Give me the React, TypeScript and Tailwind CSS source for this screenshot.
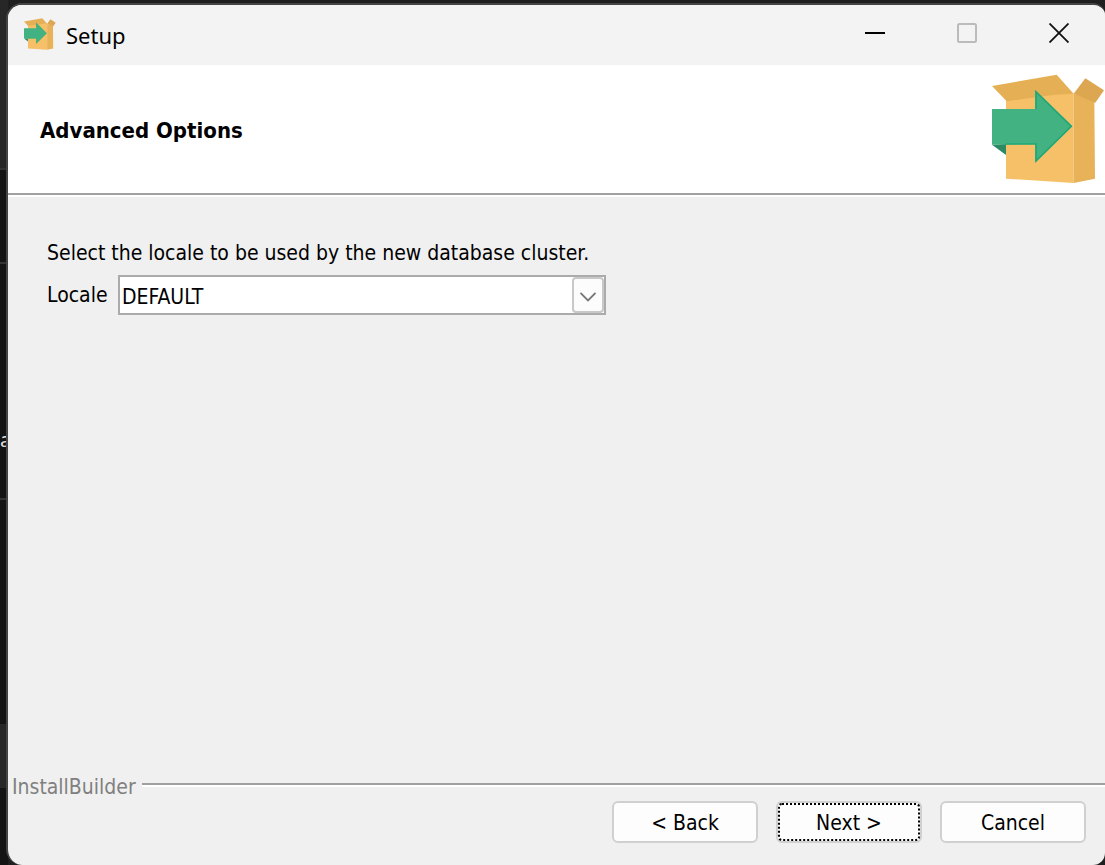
import { useState } from "react";

function BoxLogo({ className }: { className: string }) {
  return (
    <svg viewBox="51 42 339 330" preserveAspectRatio="none" className={className} aria-hidden="true">
      <path d="M93 105 L296 100 L296 369 L93 356 Z" fill="#f5c067" />
      <path d="M296 101 L358 122 L360 356 L296 369 Z" fill="#e7b258" />
      <path d="M51 78 L245 44 L296 101 L240 104 L95 124 Z" fill="#e5b055" />
      <path d="M331 55 L387 91 L361 128 L296 101 Z" fill="#dda650" />
      <path d="M51 254 L93 252 L93 285 Z" fill="#2b8a63" />
      <path d="M51 147 L181 147 L181 93 L291 199 L181 305 L181 252 L51 254 Z" fill="#43b283" />
      <path d="M93 252 L183 252 L183 303 L289 199 L183 95 L183 147" fill="none" stroke="#1fa877" strokeWidth="5" />
    </svg>
  );
}

function Rule() {
  return <div className="h-1 border-t-2 border-[#a0a0a0] bg-white" />;
}

const captionButtonClass = "flex h-14 w-[92px] items-center justify-center";

function TitleBar() {
  return (
    <header className="flex h-15 shrink-0 items-start bg-[#f3f3f3] pl-4">
      <BoxLogo className="mt-[13px] size-8" />
      <span className="mt-4 ml-2.5 flex-1 font-['Noto_Sans',sans-serif] text-[22px] leading-7">Setup</span>
      <button type="button" aria-label="Minimize" className={captionButtonClass}>
        <svg viewBox="0 0 20 20" className="size-5" aria-hidden="true">
          <path d="M0 10 H20" stroke="#000" strokeWidth="2" />
        </svg>
      </button>
      <button type="button" aria-label="Maximize" disabled className={captionButtonClass}>
        <svg viewBox="0 0 20 20" className="size-5" fill="none" aria-hidden="true">
          <rect x="1" y="1" width="18" height="18" rx="1.5" stroke="#bbb" strokeWidth="2" />
        </svg>
      </button>
      <button type="button" aria-label="Close" className={captionButtonClass}>
        <svg viewBox="0 0 20 20" className="size-5" aria-hidden="true">
          <path d="M0.5 0.5 L19.5 19.5 M19.5 0.5 L0.5 19.5" stroke="#111" strokeWidth="1.8" />
        </svg>
      </button>
    </header>
  );
}

const buttonClass =
  "h-[42px] w-[146px] rounded-md border-2 border-[#d0d0d0] bg-[#fdfdfd] pt-0.5";

export default function App() {
  const [locale, setLocale] = useState("DEFAULT");
  return (
    <div className="grid min-h-screen overflow-hidden bg-[#1f1f1f] font-['DejaVu_Sans_Condensed','DejaVu_Sans',sans-serif] text-[21px] leading-7 text-black">
      <div className="col-start-1 row-start-1 flex w-2 flex-col overflow-hidden bg-[#141414]">
        <div className="h-[170px] border-b-2 border-[#333] bg-[#272727]" />
        <div className="h-[94px] border-b-2 border-[#333]" />
        <div className="flex h-[236px] flex-col justify-end border-b-2 border-[#333]">
          <span className="pb-11 font-['Noto_Sans',sans-serif] text-xl text-[#ddd]">a</span>
        </div>
        <div className="flex-1" />
        <div className="mb-[77px] h-16 bg-[#272727]" />
      </div>

      <div className="z-10 col-start-1 row-start-1 mt-[3px] ml-1.5 flex flex-col overflow-hidden rounded-l-2xl rounded-r-xl border-t-2 border-l-2 border-[#444] bg-[#f0f0f0]">
        <TitleBar />
        <div className="flex h-32 shrink-0 items-center justify-between bg-white pl-8">
          <h1 className="pt-1 text-[22px] font-bold">Advanced Options</h1>
          <BoxLogo className="h-[110px] w-[113px]" />
        </div>
        <Rule />

        <main className="flex-1 px-[39px] pt-[42px]">
          <p>Select the locale to be used by the new database cluster.</p>
          <div className="mt-2 flex items-center">
            <label htmlFor="locale" className="w-[71px]">Locale</label>
            <div className="relative w-[488px]">
              <select
                id="locale"
                value={locale}
                onChange={(event) => setLocale(event.target.value)}
                className="block h-10 w-full appearance-none border-2 border-[#ababab] bg-white pt-1 pl-0.5"
              >
                <option>DEFAULT</option>
              </select>
              <span className="pointer-events-none absolute inset-y-0.5 right-0.5 flex w-8 items-center justify-center rounded-sm border-2 border-[#c8c8c8] bg-[#fcfcfc] pt-1">
                <svg viewBox="0 0 16 10" className="h-2.5 w-4" fill="none" aria-hidden="true">
                  <path d="M0.5 1 L8 8.5 L15.5 1" stroke="#777" strokeWidth="1.8" />
                </svg>
              </span>
            </div>
          </div>
        </main>

        <footer className="pb-[22px]">
          <div className="flex items-start gap-1.5 pl-1">
            <span className="text-[#808080]">InstallBuilder</span>
            <div className="flex-1 pt-2.5">
              <Rule />
            </div>
          </div>
          <div className="flex justify-end gap-[18px] pr-[19px]">
            <button type="button" className={buttonClass}>&lt; Back</button>
            <button type="button" className={buttonClass + " relative"}>
              <span className="absolute inset-0 rounded-sm border-2 border-dotted border-black" />
              Next &gt;
            </button>
            <button type="button" className={buttonClass}>Cancel</button>
          </div>
        </footer>
      </div>
    </div>
  );
}
